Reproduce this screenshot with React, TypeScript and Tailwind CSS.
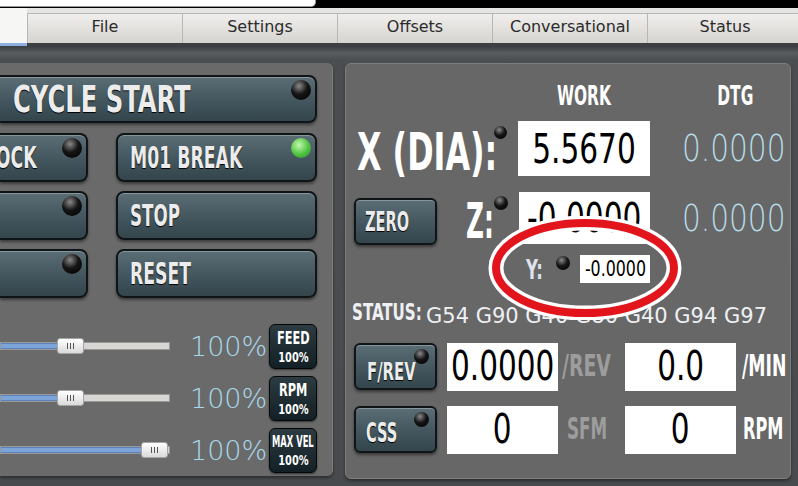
import React from 'react';

const cond = "inline-block whitespace-nowrap leading-none font-['DejaVu_Sans_Condensed','DejaVu_Sans',sans-serif] font-bold";

const Led: React.FC<{ on?: boolean; className?: string }> = ({ on, className }) => (
  <span
    className={`block shrink-0 rounded-full ${
      on
        ? 'bg-[radial-gradient(circle_at_40%_35%,#c4f9ae,#4cc23f_55%,#2f8a2a)]'
        : 'bg-[radial-gradient(circle_at_40%_30%,#8a8a8a,#151515_45%,#000)]'
    } ${className ?? ''}`}
  />
);

const Btn: React.FC<{
  children?: React.ReactNode;
  led?: 'on' | 'off';
  ledClass?: string;
  className?: string;
  textClass?: string;
}> = ({ children, led, ledClass, className, textClass }) => (
  <div
    className={`relative shrink-0 flex items-center overflow-hidden bg-gradient-to-b from-[#5b6e76] via-[#45585f] to-[#34454c] border-2 border-[#0f1416] shadow-[inset_0_1px_0_rgba(255,255,255,0.28),0_2px_3px_rgba(0,0,0,0.45)] ${className ?? ''}`}
  >
    {children && (
      <span className={`${cond} text-[#ececec] [text-shadow:0_1px_1px_#000] ${textClass ?? ''}`}>{children}</span>
    )}
    {led && <Led on={led === 'on'} className={`absolute ${ledClass ?? 'w-[20px] h-[20px] right-[4px] top-[3px]'}`} />}
  </div>
);

const Slider: React.FC<{ pos: number; label: string }> = ({ pos, label }) => (
  <div className="flex items-center h-[52px]">
    <div className="relative shrink-0 w-[170px] h-[8px] bg-[#d8d6d2] border border-[#9b9995]">
      <div className="absolute left-0 top-0 bottom-0 bg-[#7ca4d8] border-y border-[#5b83b9]" style={{ width: pos + 2 }} />
      <div
        className="absolute top-[-5px] h-[16px] w-[27px] rounded-[3px] bg-gradient-to-b from-white to-[#dadada] border border-[#a5a5a5] flex items-center justify-center gap-[2px]"
        style={{ left: pos }}
      >
        <span className="w-[1px] h-[6px] bg-[#555]" />
        <span className="w-[1px] h-[6px] bg-[#555]" />
        <span className="w-[1px] h-[6px] bg-[#555]" />
      </div>
    </div>
    <span className="ml-[20px] text-[27px] text-[#a9d9ea] font-['DejaVu_Sans',sans-serif] font-light leading-none">100%</span>
    <div className="ml-auto shrink-0 w-[48px] h-[45px] rounded-[6px] bg-gradient-to-b from-[#2c3c42] to-[#132025] border border-[#050808] flex flex-col items-center justify-center shadow-[0_1px_2px_rgba(0,0,0,0.5)]">
      {label === 'MAX VEL' ? (
        <span className={`${cond} text-white text-[16px] scale-x-[0.58]`}>{label}</span>
      ) : (
        <span className={`${cond} text-white text-[18px] scale-x-[0.7]`}>{label}</span>
      )}
      <span className={`${cond} text-white text-[14px] mt-[3px] scale-x-[0.78]`}>100%</span>
    </div>
  </div>
);

const Field: React.FC<{ value: string; className?: string; textClass?: string }> = ({ value, className, textClass }) => (
  <div className={`shrink-0 bg-white flex items-center justify-center overflow-hidden ${className ?? ''}`}>
    <span className={`inline-block whitespace-nowrap font-['DejaVu_Sans',sans-serif] text-black leading-none ${textClass ?? ''}`}>{value}</span>
  </div>
);

const Dtg: React.FC<{ value: string }> = ({ value }) => (
  <div className="w-[135px] shrink-0 flex justify-end">
    <span className="inline-block whitespace-nowrap text-[37px] text-[#b6dce8] leading-none font-['DejaVu_Sans',sans-serif] font-extralight scale-x-[0.8] origin-right">
      {value}
    </span>
  </div>
);

const tabs = ['File', 'Settings', 'Offsets', 'Conversational', 'Status'];

const App: React.FC = () => {
  return (
    <div className="w-[798px] h-[486px] overflow-hidden flex flex-col bg-[#474a4c] font-['DejaVu_Sans',sans-serif]">
      {/* window strip */}
      <div className="flex h-[8px] shrink-0 bg-black">
        <div className="w-[316px] h-[7px] bg-white border-r border-b border-[#9a9a9a] rounded-br-[5px]" />
      </div>
      {/* tab bar */}
      <div className="flex h-[38px] shrink-0 bg-[#e4e4e2] items-end">
        <div className="w-[27px] shrink-0 h-full bg-[#f6f6f5] border-b-[3px] border-[#8db0de]" />
        <div className="flex h-[33px] flex-1 bg-[#3d4042] items-start">
          {tabs.map((t) => (
            <div
              key={t}
              className="w-[155px] shrink-0 h-[30px] flex items-center justify-center pb-[3px] bg-gradient-to-b from-[#f0efed] to-[#d6d4d0] border-l border-t border-[#b9b7b3] text-[16px] text-[#2b2b2b]"
            >
              {t}
            </div>
          ))}
        </div>
      </div>
      {/* main */}
      <div className="flex-1 flex pt-[17px] bg-[linear-gradient(180deg,#3a3d3f_0px,#5a5d5f_7px,#4b4e50_14px,#484b4d_100%)]">
        {/* left panel */}
        <div className="w-[333px] shrink-0 h-[413px] bg-[#6a6a6a] rounded-r-[6px] border-r border-[#7c7c7c] pr-[15px] pt-[12px] shadow-[0_2px_3px_rgba(0,0,0,0.4)]">
          <Btn led="off" className="h-[48px] rounded-r-[8px] border-l-0 pl-[13px]" textClass="text-[38px] scale-x-[0.71] origin-left">
            CYCLE START
          </Btn>
          <div className="grid grid-cols-[88px_1fr] gap-x-[28px] gap-y-[9px] mt-[10px]">
            <Btn led="off" className="h-[49px] rounded-r-[8px] border-l-0 justify-end pr-[49px]" textClass="text-[30px] scale-x-[0.64] origin-right">
              SINGLE BLOCK
            </Btn>
            <Btn led="on" className="h-[49px] rounded-[8px] pl-[12px]" textClass="text-[30px] scale-x-[0.64] origin-left">
              M01 BREAK
            </Btn>
            <Btn led="off" className="h-[49px] rounded-r-[8px] border-l-0" />
            <Btn className="h-[49px] rounded-[8px] pl-[12px]" textClass="text-[30px] scale-x-[0.62] origin-left">
              STOP
            </Btn>
            <Btn led="off" className="h-[49px] rounded-r-[8px] border-l-0" />
            <Btn className="h-[49px] rounded-[8px] pl-[12px]" textClass="text-[30px] scale-x-[0.64] origin-left">
              RESET
            </Btn>
          </div>
          <div className="mt-[22px] flex flex-col">
            <Slider pos={56} label="FEED" />
            <Slider pos={56} label="RPM" />
            <Slider pos={140} label="MAX VEL" />
          </div>
        </div>

        {/* right panel */}
        <div className="relative shrink-0 ml-[12px] w-[446px] h-[416px] bg-[#676767] rounded-[6px] border border-[#7d7d7d] shadow-[0_2px_3px_rgba(0,0,0,0.4)]">
          <div className="flex h-[57px] items-center pt-[7px]">
            <div className="w-[132px] shrink-0 ml-[172px] flex justify-center">
              <span className={`${cond} text-white text-[26px] scale-x-[0.66]`}>WORK</span>
            </div>
            <div className="w-[100px] shrink-0 ml-[35px] flex justify-center">
              <span className={`${cond} text-white text-[26px] scale-x-[0.66]`}>DTG</span>
            </div>
          </div>
          {/* X row */}
          <div className="flex items-center h-[55px]">
            <div className="w-[148px] shrink-0 pl-[11px]">
              <span className={`${cond} text-white text-[52px] scale-x-[0.68] origin-left mt-[6px]`}>X (DIA):</span>
            </div>
            <Led className="w-[13px] h-[13px] self-start mt-[5px]" />
            <Field value="5.5670" className="ml-[11px] w-[132px] h-[55px]" textClass="text-[40px] scale-x-[0.74]" />
            <Dtg value="0.0000" />
          </div>
          {/* Z row */}
          <div className="flex h-[52px] mt-[16px]">
            <Btn className="ml-[8px] mt-[6px] w-[83px] h-[47px] rounded-[6px] pl-[9px]" textClass="text-[27px] scale-x-[0.6] origin-left">
              ZERO
            </Btn>
            <div className="w-[57px] shrink-0 pl-[29px] flex items-center">
              <span className={`${cond} text-white text-[50px] scale-x-[0.55] origin-left mt-[6px]`}>Z:</span>
            </div>
            <Led className="w-[14px] h-[14px] mt-[4px]" />
            <Field value="-0.0000" className="ml-[11px] w-[131px] h-[52px]" textClass="text-[40px] scale-x-[0.74]" />
            <div className="flex items-center">
              <Dtg value="0.0000" />
            </div>
          </div>
          {/* Y row */}
          <div className="flex items-center h-[28px] mt-[11px]">
            <div className="w-[210px] shrink-0 pl-[180px]">
              <span className={`${cond} text-[#dde2ee] text-[27px] scale-x-[0.68] origin-left mt-[4px]`}>Y:</span>
            </div>
            <Led className="w-[14px] h-[14px] self-start mt-[1px]" />
            <Field value="-0.0000" className="ml-[10px] w-[70px] h-[28px]" textClass="text-[22px] scale-x-[0.72]" />
          </div>
          {/* status */}
          <div className="flex items-end h-[44px] ml-[6px] whitespace-nowrap">
            <div className="w-[74px] shrink-0">
              <span className={`${cond} text-[#eef0f4] text-[23px] scale-x-[0.73] origin-left`}>STATUS:</span>
            </div>
            <span className="text-[#eef0f4] text-[21px] leading-none">G54 G90 G40 G80 G40 G94 G97</span>
          </div>
          {/* F/REV row */}
          <div className="flex items-center h-[47px] mt-[16px]">
            <Btn
              led="off"
              ledClass="w-[15px] h-[15px] right-[6px] top-[4px]"
              className="ml-[8px] w-[83px] h-[47px] rounded-[6px] pl-[11px]"
              textClass="text-[25px] scale-x-[0.66] origin-left mt-[10px]"
            >
              F/REV
            </Btn>
            <Field value="0.0000" className="ml-[10px] w-[111px] h-[48px]" textClass="text-[41px] scale-x-[0.72]" />
            <div className="w-[67px] shrink-0 pl-[4px]">
              <span className={`${cond} text-[#9d9d9d] text-[30px] scale-x-[0.7] origin-left`}>/REV</span>
            </div>
            <Field value="0.0" className="w-[111px] h-[48px]" textClass="text-[41px] scale-x-[0.72]" />
            <div className="pl-[6px]">
              <span className={`${cond} text-white text-[30px] scale-x-[0.64] origin-left`}>/MIN</span>
            </div>
          </div>
          {/* CSS row */}
          <div className="flex items-center h-[47px] mt-[16px]">
            <Btn
              led="off"
              ledClass="w-[15px] h-[15px] right-[6px] top-[4px]"
              className="ml-[8px] w-[83px] h-[47px] rounded-[6px] pl-[10px]"
              textClass="text-[27px] scale-x-[0.6] origin-left mt-[6px]"
            >
              CSS
            </Btn>
            <Field value="0" className="ml-[10px] w-[111px] h-[48px]" textClass="text-[41px] scale-x-[0.72]" />
            <div className="w-[67px] shrink-0 pl-[9px]">
              <span className={`${cond} text-[#9d9d9d] text-[30px] scale-x-[0.62] origin-left`}>SFM</span>
            </div>
            <Field value="0" className="w-[111px] h-[48px]" textClass="text-[41px] scale-x-[0.72]" />
            <div className="pl-[7px]">
              <span className={`${cond} text-white text-[30px] scale-x-[0.6] origin-left`}>RPM</span>
            </div>
          </div>

          {/* red annotation ellipse */}
          <svg className="absolute left-[141px] top-[152px] pointer-events-none" width="196" height="104" viewBox="0 0 196 104">
            <ellipse cx="98" cy="52" rx="89" ry="45" fill="none" stroke="#ffffff" strokeWidth="15" />
            <ellipse cx="98" cy="52" rx="89" ry="45" fill="none" stroke="#e3151c" strokeWidth="8" />
          </svg>
        </div>
      </div>
    </div>
  );
};

export default App;
